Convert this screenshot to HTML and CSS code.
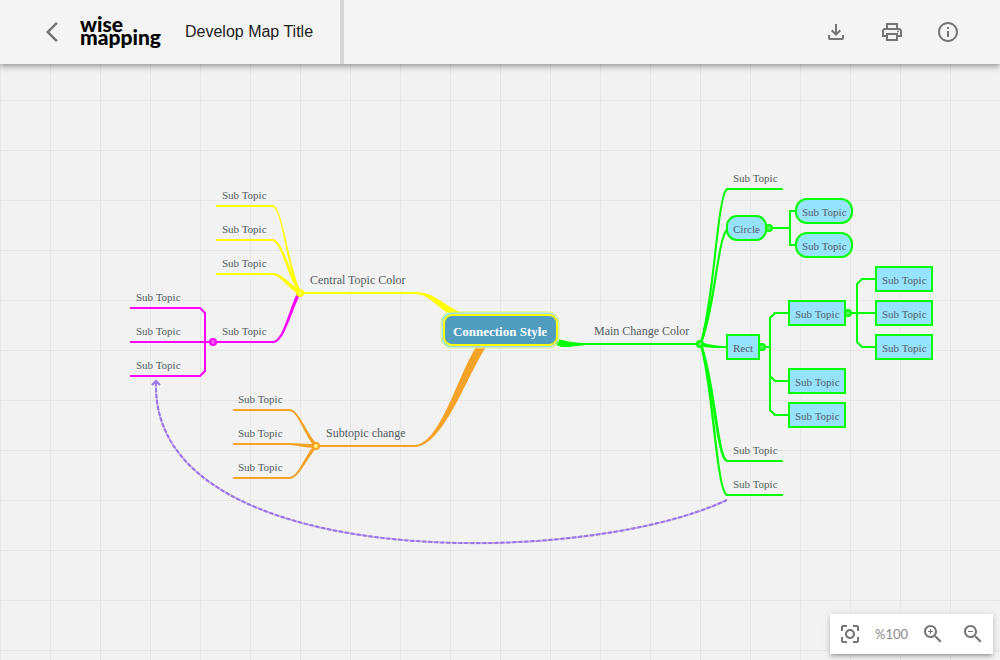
FILE: index.html
```html
<!DOCTYPE html>
<html lang="en">
<head>
<meta charset="utf-8">
<title>Develop Map Title</title>
<link rel="stylesheet" href="styles.css">
</head>
<body>
<header class="app-bar">
  <div class="app-bar-start">
    <button class="icon-button" type="button" aria-label="Back">
      <svg class="icon" viewBox="0 0 24 24"><path d="M17.77 3.77 16 2 6 12l10 10 1.77-1.77L9.54 12z"/></svg>
    </button>
    <div class="logo"><span>wise</span><span>mapping</span></div>
    <h1 class="map-title">Develop Map Title</h1>
  </div>
  <nav class="app-bar-actions" aria-label="Map actions">
    <button class="icon-button" type="button" aria-label="Export">
      <svg class="icon" viewBox="0 0 24 24"><path d="M18 15v3H6v-3H4v3c0 1.1.9 2 2 2h12c1.1 0 2-.9 2-2v-3h-2zm-1-4-1.41-1.41L13 12.17V4h-2v8.17L8.41 9.59 7 11l5 5 5-5z"/></svg>
    </button>
    <button class="icon-button" type="button" aria-label="Print">
      <svg class="icon" viewBox="0 0 24 24"><path d="M19 8h-1V3H6v5H5c-1.66 0-3 1.34-3 3v6h4v4h12v-4h4v-6c0-1.66-1.34-3-3-3zM8 5h8v3H8V5zm8 12v2H8v-4h8v2zm2-2v-2H6v2H4v-4c0-.55.45-1 1-1h14c.55 0 1 .45 1 1v4h-2z"/><circle cx="18" cy="11.5" r="1"/></svg>
    </button>
    <button class="icon-button" type="button" aria-label="Info">
      <svg class="icon" viewBox="0 0 24 24"><path d="M11 7h2v2h-2zm0 4h2v6h-2zm1-9C6.48 2 2 6.48 2 12s4.48 10 10 10 10-4.48 10-10S17.52 2 12 2zm0 18c-4.41 0-8-3.59-8-8s3.59-8 8-8 8 3.59 8 8-3.59 8-8 8z"/></svg>
    </button>
  </nav>
</header>

<main class="canvas">
  <svg class="map" viewBox="0 64 1000 596" role="img" aria-label="Mind map">
    <!-- relationship -->
    <g class="relation">
      <path class="relation-base" d="M156 382C150 572 580 569 727 500"/>
      <path class="relation-dash" d="M156 382C150 572 580 569 727 500"/>
      <path class="relation-head" d="M152 385L156 381L160 385"/>
    </g>

    <!-- Subtopic change branch -->
    <g class="orange">
      <path class="taper" d="M415 445C440 443 456 380 476 347L486 347C466 378 443 446 415 447Z"/>
      <path class="taper" d="M289 409C299 409 305 431 317 444L314 446C303 433 298 411 289 411Z"/>
      <path class="taper" d="M289 443C297 443 303 444 316 444L316 448C303 448 297 445 289 445Z"/>
      <path class="taper" d="M289 477C298 477 303 459 314 445L317 447C305 461 299 479 289 479Z"/>
      <path class="line" d="M316 446H416M233 410H290M233 444H290M233 478H290"/>
      <circle class="dot" cx="316" cy="446" r="3"/>
    </g>

    <!-- Central Topic Color branch -->
    <g class="magenta">
      <path class="taper" d="M273 341C282 341 288 313 297 293L300 295C290 315 284 343 273 343Z"/>
      <path class="line" d="M130 308H200L205 313V371L200 376H130M130 342H274"/>
      <circle class="dot" cx="213" cy="342" r="3"/>
    </g>
    <g class="yellow">
      <path class="taper" d="M415 292C434 292 442 304 462 313L448 313C435 305 428 294 415 294Z"/>
      <path class="taper" d="M272 205C283 205 288 265 301 292L299 293C286 266 282 207 272 207Z"/>
      <path class="taper" d="M272 239C283 239 289 272 301 292L299 293C286 273 281 241 272 241Z"/>
      <path class="taper" d="M272 273C282 273 288 283 301 291L299 294C286 287 281 275 272 275Z"/>
      <path class="line" d="M300 293H416M216 206H273M216 240H273M216 274H273"/>
      <circle class="dot" cx="300" cy="293" r="3"/>
    </g>

    <!-- Main Change Color branch -->
    <g class="green">
      <path class="taper" d="M556 339C568 341 572 343 590 343L590 345C580 345 576 347 562 347L556 345Z"/>
      <path class="taper" d="M727 188C717 190 714 290 700 343L702 344C716 292 719 192 728 190Z"/>
      <path class="taper" d="M727 228C717 236 714 304 700 343L702 344C716 306 719 240 727 232Z"/>
      <path class="taper" d="M700 342C708 344 715 346 727 346L727 348C715 348 708 348 700 346Z"/>
      <path class="taper" d="M700 345C714 390 716 460 727 462L728 460C719 458 716 384 702 344Z"/>
      <path class="taper" d="M700 345C713 398 716 494 727 496L728 494C718 492 715 392 702 344Z"/>
      <path class="line" d="M586 344H700M727 189H783M727 461H783M727 495H783"/>
      <path class="line" d="M769 228H790M796 211H790V245H796"/>
      <path class="line" d="M762 347H771M789 313H775L770 318V410L775 415H789M770 376L775 381H789"/>
      <path class="line" d="M849 313H876M876 279H862L857 284V342L862 347H876"/>
      <rect class="shape" x="727" y="216" width="39" height="24" rx="10"/>
      <rect class="shape" x="796" y="199" width="56" height="24" rx="11"/>
      <rect class="shape" x="796" y="233" width="56" height="24" rx="11"/>
      <rect class="shape" x="727" y="335" width="32" height="24"/>
      <rect class="shape" x="789" y="301" width="56" height="24"/>
      <rect class="shape" x="789" y="369" width="56" height="24"/>
      <rect class="shape" x="789" y="403" width="56" height="24"/>
      <rect class="shape" x="876" y="267" width="56" height="24"/>
      <rect class="shape" x="876" y="301" width="56" height="24"/>
      <rect class="shape" x="876" y="335" width="56" height="24"/>
      <circle class="dot" cx="700" cy="344" r="3"/>
      <circle class="dot" cx="769" cy="228" r="3"/>
      <circle class="dot" cx="762" cy="347" r="3"/>
      <circle class="dot" cx="848" cy="313" r="3"/>
    </g>

    <!-- central topic -->
    <rect class="halo-edge" x="441" y="312" width="118" height="36" rx="10"/>
    <rect class="halo" x="442" y="313" width="116" height="34" rx="9"/>
    <rect class="central" x="444" y="315" width="113" height="30" rx="8"/>
    <text class="central-text" x="500" y="336">Connection Style</text>

    <g class="main-text">
      <text x="310" y="284">Central Topic Color</text>
      <text x="326" y="437">Subtopic change</text>
      <text x="594" y="335">Main Change Color</text>
    </g>
    <g class="sub-text">
      <text x="222" y="199">Sub Topic</text>
      <text x="222" y="233">Sub Topic</text>
      <text x="222" y="267">Sub Topic</text>
      <text x="222" y="335">Sub Topic</text>
      <text x="136" y="301">Sub Topic</text>
      <text x="136" y="335">Sub Topic</text>
      <text x="136" y="369">Sub Topic</text>
      <text x="238" y="403">Sub Topic</text>
      <text x="238" y="437">Sub Topic</text>
      <text x="238" y="471">Sub Topic</text>
      <text x="733" y="182">Sub Topic</text>
      <text x="733" y="233">Circle</text>
      <text x="733" y="352">Rect</text>
      <text x="733" y="454">Sub Topic</text>
      <text x="733" y="488">Sub Topic</text>
      <text x="802" y="216">Sub Topic</text>
      <text x="802" y="250">Sub Topic</text>
      <text x="795" y="318">Sub Topic</text>
      <text x="795" y="386">Sub Topic</text>
      <text x="795" y="420">Sub Topic</text>
      <text x="882" y="284">Sub Topic</text>
      <text x="882" y="318">Sub Topic</text>
      <text x="882" y="352">Sub Topic</text>
    </g>
  </svg>

  <div class="zoom-bar" role="toolbar" aria-label="Zoom">
    <button class="icon-button" type="button" aria-label="Center">
      <svg class="icon" viewBox="0 0 24 24"><path d="M5 15H3v4c0 1.1.9 2 2 2h4v-2H5v-4zM5 5h4V3H5c-1.1 0-2 .9-2 2v4h2V5zm14-2h-4v2h4v4h2V5c0-1.1-.9-2-2-2zm0 16h-4v2h4c1.1 0 2-.9 2-2v-4h-2v4zM12 7c-2.76 0-5 2.24-5 5s2.24 5 5 5 5-2.24 5-5-2.24-5-5-5zm0 8c-1.65 0-3-1.35-3-3s1.35-3 3-3 3 1.35 3 3-1.35 3-3 3z"/></svg>
    </button>
    <span class="zoom-level">%100</span>
    <button class="icon-button" type="button" aria-label="Zoom in">
      <svg class="icon" viewBox="0 0 24 24"><path d="M15.5 14h-.79l-.28-.27C15.41 12.59 16 11.11 16 9.5 16 5.91 13.09 3 9.5 3S3 5.91 3 9.5 5.91 16 9.5 16c1.61 0 3.09-.59 4.23-1.57l.27.28v.79l5 4.99L20.49 19l-4.99-5zm-6 0C7.01 14 5 11.99 5 9.5S7.01 5 9.5 5 14 7.01 14 9.5 11.99 14 9.5 14zm.5-7H9v2H7v1h2v2h1v-2h2V9h-2z"/></svg>
    </button>
    <button class="icon-button" type="button" aria-label="Zoom out">
      <svg class="icon" viewBox="0 0 24 24"><path d="M15.5 14h-.79l-.28-.27C15.41 12.59 16 11.11 16 9.5 16 5.91 13.09 3 9.5 3S3 5.91 3 9.5 5.91 16 9.5 16c1.61 0 3.09-.59 4.23-1.57l.27.28v.79l5 4.99L20.49 19l-4.99-5zm-6 0C7.01 14 5 11.99 5 9.5S7.01 5 9.5 5 14 7.01 14 9.5 11.99 14 9.5 14zM7 9h5v1H7z"/></svg>
    </button>
  </div>
</main>
</body>
</html>
```
FILE: styles.css
```css
* {
  box-sizing: border-box;
}

body {
  margin: 0;
  height: 100vh;
  display: flex;
  flex-direction: column;
  overflow: hidden;
  background: #f2f2f2;
  font-family: "Liberation Sans", Arial, sans-serif;
}

.app-bar {
  position: relative;
  z-index: 1;
  display: flex;
  justify-content: space-between;
  flex: none;
  height: 64px;
  background: #f4f4f4;
  box-shadow: 0 2px 4px -1px rgba(0, 0, 0, 0.2), 0 4px 5px rgba(0, 0, 0, 0.14), 0 1px 10px rgba(0, 0, 0, 0.12);
}

.app-bar-start {
  display: flex;
  align-items: center;
  padding: 0 27px 0 32px;
  border-right: 4px solid #d6d6d6;
}

.app-bar-actions {
  display: flex;
  align-items: center;
  gap: 16px;
  padding-right: 32px;
}

.icon-button {
  display: flex;
  align-items: center;
  justify-content: center;
  width: 40px;
  height: 40px;
  padding: 0;
  border: 0;
  background: none;
  cursor: pointer;
}

.icon {
  display: block;
  width: 24px;
  height: 24px;
  fill: #757575;
}

.logo {
  display: flex;
  flex-direction: column;
  margin: 0 24px 0 8px;
  padding-bottom: 4px;
  color: #000;
  font: 900 21px/13px Lato, "Open Sans", sans-serif;
}

.map-title {
  margin: 0;
  color: #212121;
  font-size: 16px;
  font-weight: 400;
  line-height: 24px;
}

.canvas {
  position: relative;
  flex: 1;
  min-height: 0;
  background-color: #f2f2f2;
  background-image:
    linear-gradient(to right, #e7e7e7 1px, transparent 1px),
    linear-gradient(to bottom, #e7e7e7 1px, transparent 1px);
  background-size: 50px 50px;
  background-position: 0 36px;
}

.map {
  display: block;
  width: 100%;
  height: 100%;
}

.line {
  fill: none;
  stroke: currentColor;
  stroke-width: 2;
}

.taper {
  fill: currentColor;
}

.dot {
  stroke: currentColor;
  stroke-width: 2;
}

.yellow {
  color: #ff0;
  fill: #ffff4d;
}

.magenta {
  color: #f0f;
  fill: #ff5cff;
}

.orange {
  color: #f4a328;
  fill: #ffff80;
}

.green {
  color: #0f0;
  fill: #5cf05c;
}

.shape {
  fill: #96e3ff;
  stroke: currentColor;
  stroke-width: 2;
}

.halo-edge {
  fill: none;
  stroke: #ecf573;
  stroke-width: 1;
}

.halo {
  fill: #a0dfe8;
  stroke: #a0dfe8;
  stroke-width: 1;
}

.central {
  fill: #509dc0;
  stroke: #ff0;
  stroke-width: 2;
}

.relation {
  fill: none;
  stroke: #9b74e6;
  stroke-width: 2;
}

.relation-base {
  opacity: 0.5;
}

.relation-dash {
  stroke-dasharray: 4 2;
}

.central-text,
.main-text,
.sub-text {
  font-family: "Liberation Serif", "Times New Roman", serif;
  fill: #525c61;
}

.central-text {
  font-size: 13px;
  font-weight: 700;
  fill: #fff;
  text-anchor: middle;
}

.main-text {
  font-size: 12px;
}

.sub-text {
  font-size: 11px;
}

.zoom-bar {
  position: absolute;
  right: 7px;
  bottom: 6px;
  display: flex;
  align-items: center;
  background: #fff;
  box-shadow: 0 3px 3px -2px rgba(0, 0, 0, 0.2), 0 3px 4px rgba(0, 0, 0, 0.14), 0 1px 8px rgba(0, 0, 0, 0.12);
}

.zoom-level {
  min-width: 43px;
  color: #8a8a8a;
  font: 13px/20px Lato, sans-serif;
  text-align: center;
}
```
